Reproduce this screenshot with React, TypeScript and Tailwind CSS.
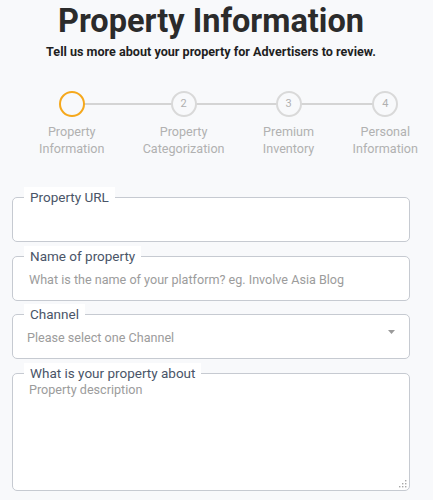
import React from 'react';

const steps = [
  { n: 1, label: ['Property', 'Information'], active: true },
  { n: 2, label: ['Property', 'Categorization'] },
  { n: 3, label: ['Premium', 'Inventory'] },
  { n: 4, label: ['Personal', 'Information'] },
];

function Field({ label, children, tall }: { label: string; children?: React.ReactNode; tall?: boolean }) {
  return (
    <div
      className={`relative rounded-[5px] border border-[#c6cad1] bg-white ${tall ? 'h-[118px]' : 'h-[45px]'}`}
    >
      <span className="absolute left-[11px] top-[-11px] bg-white px-[6px] text-[13.5px] leading-[20px] text-[#4a5568]">
        {label}
      </span>
      {children}
    </div>
  );
}

export default function App() {
  return (
    <div
      className="h-[500px] w-[433px] overflow-hidden bg-[#f8f9fb]"
      style={{ fontFamily: 'Roboto, "Noto Sans", sans-serif' }}
    >
      <div className="w-[422px]">
        {/* Header */}
        <h1 className="pt-[2px] text-center text-[32.5px] font-bold leading-[38px] text-[#2b2b2b]">
          Property Information
        </h1>
        <p className="mt-[3px] text-center text-[12.6px] font-bold leading-[18px] text-[#1f1f1f]">
          Tell us more about your property for Advertisers to review.
        </p>
      </div>

      {/* Stepper */}
      <div className="relative mt-[30px] flex justify-between pl-[39px] pr-[15px]">
        <div className="absolute left-[72px] right-[47px] top-[12px] h-[2px] bg-[#d4d4d4]" />
        {steps.map((s) => (
          <div key={s.n} className="relative flex flex-col items-center">
            <div
              className={`flex h-[26px] w-[26px] items-center justify-center rounded-full border-2 bg-[#f8f9fb] text-[11px] ${
                s.active ? 'border-[#f5a81c]' : 'border-[#d9d9d9] text-[#b0b0b0]'
              }`}
            >
              {s.active ? '' : s.n}
            </div>
            <div className="mt-[6px] text-center text-[12.6px] leading-[17px] text-[#b1b1b1]">
              {s.label[0]}
              <br />
              {s.label[1]}
            </div>
          </div>
        ))}
      </div>

      {/* Form */}
      <div className="mt-[40px] flex w-[422px] flex-col gap-[13.5px] pl-[12px] pr-[12px]">
        <Field label="Property URL" />
        <Field label="Name of property">
          <div className="pl-[16px] pt-[13px] text-[12.6px] leading-[20px] text-[#9c9c9c]">
            What is the name of your platform? eg. Involve Asia Blog
          </div>
        </Field>
        <Field label="Channel">
          <div className="flex items-start justify-between pl-[14px] pr-[14px] pt-[13px]">
            <span className="text-[12.6px] leading-[20px] text-[#9c9c9c]">Please select one Channel</span>
            <svg width="7" height="4" viewBox="0 0 7 4" className="mt-[2px]">
              <path d="M0 0h7L3.5 4z" fill="#9a9a9a" />
            </svg>
          </div>
        </Field>
        <Field label="What is your property about" tall>
          <div className="pl-[16px] pt-[6px] text-[12.6px] leading-[20px] text-[#9c9c9c]">Property description</div>
          <svg width="8" height="8" viewBox="0 0 8 8" className="absolute bottom-[2px] right-[2px]">
            <g fill="#a8a8a8">
              <rect x="6" y="0" width="1.4" height="1.4" />
              <rect x="3" y="3" width="1.4" height="1.4" />
              <rect x="6" y="3" width="1.4" height="1.4" />
              <rect x="0" y="6" width="1.4" height="1.4" />
              <rect x="3" y="6" width="1.4" height="1.4" />
              <rect x="6" y="6" width="1.4" height="1.4" />
            </g>
          </svg>
        </Field>
      </div>
    </div>
  );
}
